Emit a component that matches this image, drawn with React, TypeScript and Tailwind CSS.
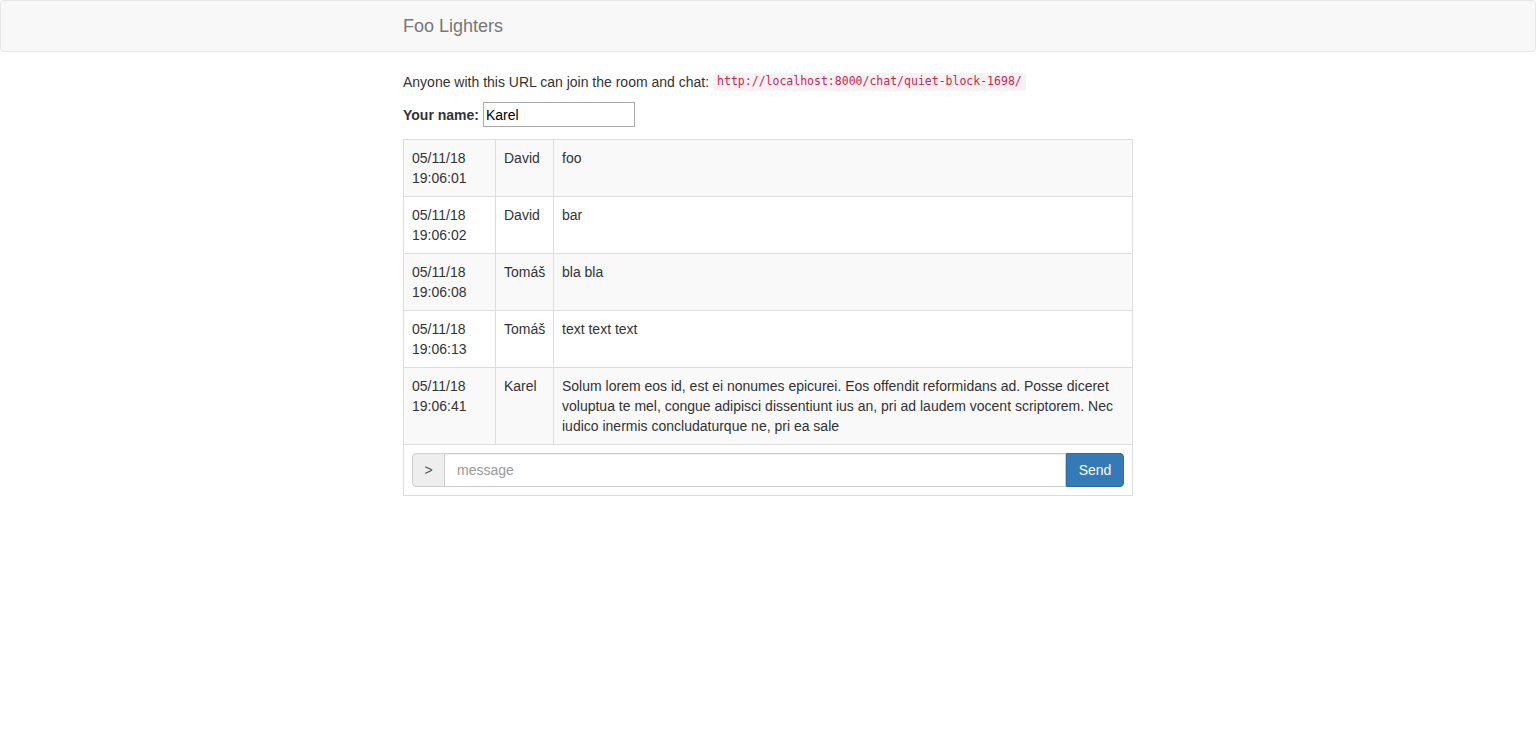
const messages = [
  { date: "05/11/18", time: "19:06:01", name: "David", text: "foo" },
  { date: "05/11/18", time: "19:06:02", name: "David", text: "bar" },
  { date: "05/11/18", time: "19:06:08", name: "Tomáš", text: "bla bla" },
  { date: "05/11/18", time: "19:06:13", name: "Tomáš", text: "text text text" },
  {
    date: "05/11/18",
    time: "19:06:41",
    name: "Karel",
    text: "Solum lorem eos id, est ei nonumes epicurei. Eos offendit reformidans ad. Posse diceret voluptua te mel, congue adipisci dissentiunt ius an, pri ad laudem vocent scriptorem. Nec iudico inermis concludaturque ne, pri ea sale",
  },
];

const App: React.FC = () => {
  return (
    <div className="min-h-screen bg-white font-['Liberation_Sans',Arial,sans-serif] text-[14px] leading-[20px] text-[#333]">
      <nav className="mb-5 h-[52px] rounded border border-[#e7e7e7] bg-[#f8f8f8]">
        <div className="mx-auto w-[730px]">
          <span className="block py-[15px] text-[18px] leading-[20px] text-[#777]">
            Foo Lighters
          </span>
        </div>
      </nav>

      <div className="mx-auto w-[730px]">
        <p className="mb-[10px] flex h-5 items-center gap-1">
          <span>Anyone with this URL can join the room and chat:</span>
          <code className="rounded bg-[#f9f2f4] px-1 py-[3px] font-['DejaVu_Sans_Mono',monospace] text-[11.5px] leading-none text-[#c7254e]">
            http://localhost:8000/chat/quiet-block-1698/
          </code>
        </p>
        <div className="mb-3 flex h-[25px] items-center gap-1">
          <label className="font-bold">Your name:</label>
          <input
            defaultValue="Karel"
            className="h-[25px] w-[152px] border border-[#a9a9a9] px-[2px] text-[14px] text-black outline-none"
          />
        </div>

        <table className="w-full table-fixed border-collapse border border-[#ddd]">
          <colgroup>
            <col className="w-[92px]" />
            <col className="w-[58px]" />
            <col />
          </colgroup>
          <tbody>
            {messages.map((m, i) => (
              <tr key={i} className={i % 2 === 0 ? "bg-[#f9f9f9]" : "bg-white"}>
                <td className="border border-[#ddd] p-2 align-top">
                  {m.date}
                  <br />
                  {m.time}
                </td>
                <td className="border border-[#ddd] p-2 align-top">{m.name}</td>
                <td className="border border-[#ddd] p-2 align-top">{m.text}</td>
              </tr>
            ))}
            <tr>
              <td colSpan={3} className="border border-[#ddd] p-2">
                <div className="flex h-[34px]">
                  <span className="flex w-[33px] items-center justify-center rounded-l border border-[#ccc] bg-[#eee] text-[#555]">
                    &gt;
                  </span>
                  <input
                    placeholder="message"
                    className="min-w-0 flex-1 border border-l-0 border-[#ccc] px-3 text-[14px] shadow-[inset_0_1px_1px_rgba(0,0,0,0.075)] outline-none placeholder:text-[#999]"
                  />
                  <button className="w-[58px] rounded-r border border-[#2e6da4] bg-[#337ab7] text-white">
                    Send
                  </button>
                </div>
              </td>
            </tr>
          </tbody>
        </table>
      </div>
    </div>
  );
};

export default App;
